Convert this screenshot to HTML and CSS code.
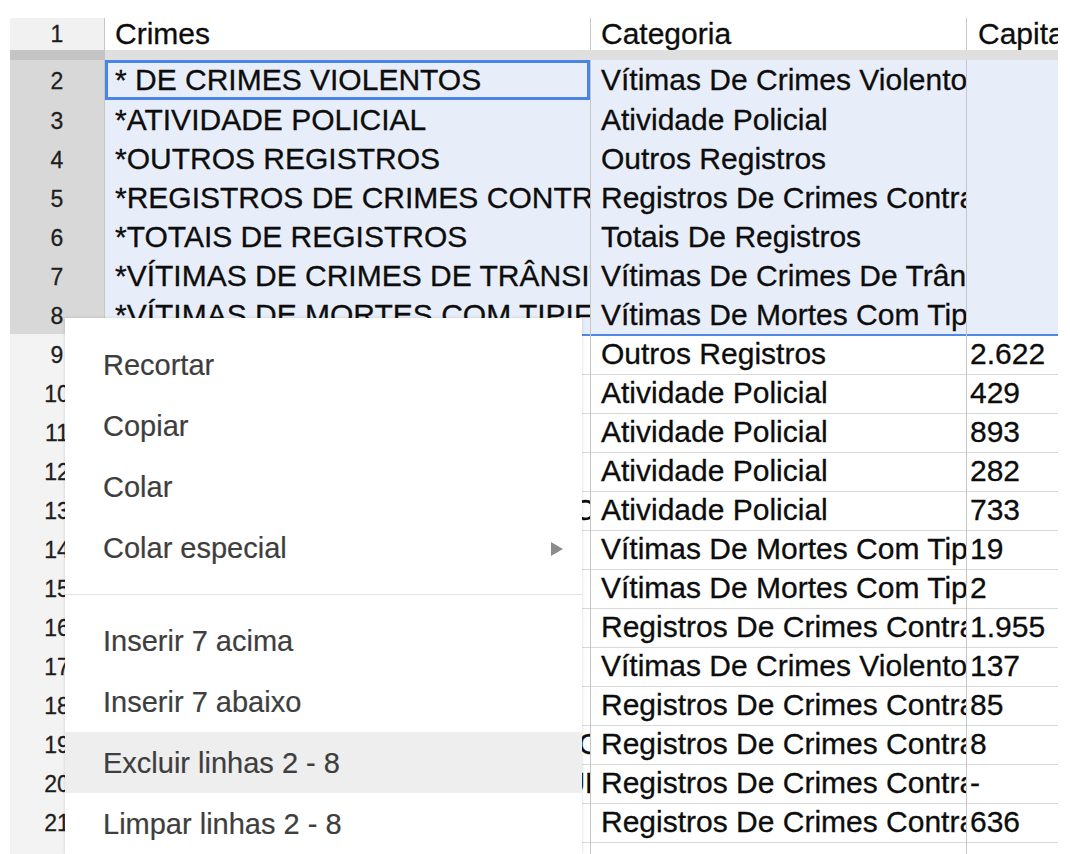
FILE: index.html
```html
<!DOCTYPE html>
<html lang="pt">
<head>
<meta charset="utf-8">
<title>Planilha</title>
<link rel="stylesheet" href="styles.css">
</head>
<body>
<div class="sheet">
  <div class="row r1"><div class="rh">1</div><div class="c">Crimes</div><div class="c">Categoria</div><div class="c cc">Capital</div></div>
  <div class="frozen"><div class="fz-h"></div><div class="fz-c"></div></div>
  <div class="row sel r2"><div class="rh">2</div><div class="c active">* DE CRIMES VIOLENTOS</div><div class="c">Vítimas De Crimes Violentos</div><div class="c cc"></div></div>
  <div class="row sel"><div class="rh">3</div><div class="c">*ATIVIDADE POLICIAL</div><div class="c">Atividade Policial</div><div class="c cc"></div></div>
  <div class="row sel"><div class="rh">4</div><div class="c">*OUTROS REGISTROS</div><div class="c">Outros Registros</div><div class="c cc"></div></div>
  <div class="row sel"><div class="rh">5</div><div class="c">*REGISTROS DE CRIMES CONTRA A PESSOA</div><div class="c">Registros De Crimes Contra A Pessoa</div><div class="c cc"></div></div>
  <div class="row sel"><div class="rh">6</div><div class="c">*TOTAIS DE REGISTROS</div><div class="c">Totais De Registros</div><div class="c cc"></div></div>
  <div class="row sel"><div class="rh">7</div><div class="c">*VÍTIMAS DE CRIMES DE TRÂNSITO</div><div class="c">Vítimas De Crimes De Trânsito</div><div class="c cc"></div></div>
  <div class="row sel sel-last"><div class="rh">8</div><div class="c">*VÍTIMAS DE MORTES COM TIPIFICAÇÃO</div><div class="c">Vítimas De Mortes Com Tipificação</div><div class="c cc"></div></div>
  <div class="row"><div class="rh">9</div><div class="c">ACHADO DE CADÁVER</div><div class="c">Outros Registros</div><div class="c cc">2.622</div></div>
  <div class="row"><div class="rh">10</div><div class="c">APREENSÃO DE DROGAS</div><div class="c">Atividade Policial</div><div class="c cc">429</div></div>
  <div class="row"><div class="rh">11</div><div class="c">ARMAS APREENDIDAS</div><div class="c">Atividade Policial</div><div class="c cc">893</div></div>
  <div class="row"><div class="rh">12</div><div class="c">CUMPRIMENTO DE MANDADO</div><div class="c">Atividade Policial</div><div class="c cc">282</div></div>
  <div class="row"><div class="rh">13</div><div class="c">APREENSÃO DE MENORES EM&nbsp;CONFLITO</div><div class="c">Atividade Policial</div><div class="c cc">733</div></div>
  <div class="row"><div class="rh">14</div><div class="c">HOMICÍDIO DOLOSO</div><div class="c">Vítimas De Mortes Com Tipificação</div><div class="c cc">19</div></div>
  <div class="row"><div class="rh">15</div><div class="c">LATROCÍNIO</div><div class="c">Vítimas De Mortes Com Tipificação</div><div class="c cc">2</div></div>
  <div class="row"><div class="rh">16</div><div class="c">ESTELIONATO</div><div class="c">Registros De Crimes Contra O Patrimônio</div><div class="c cc">1.955</div></div>
  <div class="row"><div class="rh">17</div><div class="c">ESTUPRO</div><div class="c">Vítimas De Crimes Violentos</div><div class="c cc">137</div></div>
  <div class="row"><div class="rh">18</div><div class="c">EXTORSÃO</div><div class="c">Registros De Crimes Contra O Patrimônio</div><div class="c cc">85</div></div>
  <div class="row"><div class="rh">19</div><div class="c">ROUBO A TRANSEUNTE EM VIA CENTRAL</div><div class="c">Registros De Crimes Contra O Patrimônio</div><div class="c cc">8</div></div>
  <div class="row"><div class="rh">20</div><div class="c">FURTO DE BICICLETA EM VIA PÚBLICA</div><div class="c">Registros De Crimes Contra O Patrimônio</div><div class="c cc">-</div></div>
  <div class="row"><div class="rh">21</div><div class="c">ROUBO DE VEÍCULO</div><div class="c">Registros De Crimes Contra O Patrimônio</div><div class="c cc">636</div></div>
  <div class="row"><div class="rh"></div><div class="c"></div><div class="c"></div><div class="c cc"></div></div>
</div>

<div class="menu">
  <div class="item">Recortar</div>
  <div class="item">Copiar</div>
  <div class="item">Colar</div>
  <div class="item">Colar especial<svg class="arrow" width="12" height="14" viewBox="0 0 12 14"><polygon points="0,0 12,7 0,14" fill="#8c8c8c"/></svg></div>
  <div class="sep"></div>
  <div class="item">Inserir 7 acima</div>
  <div class="item">Inserir 7 abaixo</div>
  <div class="item hover">Excluir linhas 2 - 8</div>
  <div class="item">Limpar linhas 2 - 8</div>
</div>
</body>
</html>
```

FILE: styles.css
```css
* { box-sizing: border-box; }
html, body { margin: 0; padding: 0; overflow: hidden; background: #fff; }
body {
  width: 1070px;
  height: 854px;
  font-family: "Liberation Sans", Arial, sans-serif;
}
.sheet {
  margin: 18px 0 0 10px;
  width: 1048px;
  height: 836px;
  overflow: hidden;
}
.row {
  display: grid;
  grid-template-columns: 95px 486px 376px 91px;
  height: 39px;
}
.rh {
  background: #f3f3f3;
  border-bottom: 1px solid #d4d4d4;
  border-right: 1px solid #c6c6c6;
  font-size: 23px;
  color: #1e1e1e;
  text-align: center;
  line-height: 38px;
  padding-top: 2px;
  -webkit-text-stroke: 0.3px #1e1e1e;
}
.c {
  border-right: 1px solid #c6c6c6;
  border-bottom: 1px solid #d9d9d9;
  font-size: 30px;
  color: #0d0d0d;
  white-space: nowrap;
  overflow: hidden;
  padding: 2px 0 0 10px;
  line-height: 36px;
  -webkit-text-stroke: 0.3px #0d0d0d;
}
.c.cc { border-right: none; padding-left: 3px; }

.r1 { height: 32px; }
.r1 .rh { background: #f1f1f1; border-bottom: none; line-height: 32px; padding-top: 0; }
.r1 .c { border-bottom: none; line-height: 32px; padding-top: 0; background: #fff; }
.r1 .c.cc { padding-left: 11px; }

.frozen {
  display: grid;
  grid-template-columns: 95px 1fr;
  height: 10px;
}
.fz-h { background: #c4c4c4; }
.fz-c { background: #dfdfdf; }

.r2 { height: 40px; }
.sel .c { background: #e8eef9; border-bottom-color: #cdd3dd; }
.sel .rh { background: #d8d8d8; border-bottom-color: #bfbfbf; }
.sel .c.active { box-shadow: inset 0 0 0 3px #4a85e6; }
.sel-last .c { border-bottom: 2px solid #4f88e6; }

.menu {
  position: absolute;
  left: 65px;
  top: 318px;
  width: 517px;
  height: 536px;
  background: #fff;
  box-shadow: 0 0 3px rgba(0, 0, 0, 0.16);
  padding-top: 16px;
}
.item {
  height: 61px;
  display: flex;
  align-items: center;
  justify-content: space-between;
  padding: 2px 19px 0 38px;
  font-size: 29px;
  color: #3e3e3e;
  white-space: nowrap;
  -webkit-text-stroke: 0.2px #3e3e3e;
}
.item.hover { background: #eeeeee; }
.sep {
  height: 1px;
  background: #e2e2e2;
  margin: 16px 0 15px;
}
.arrow { display: block; }
```
